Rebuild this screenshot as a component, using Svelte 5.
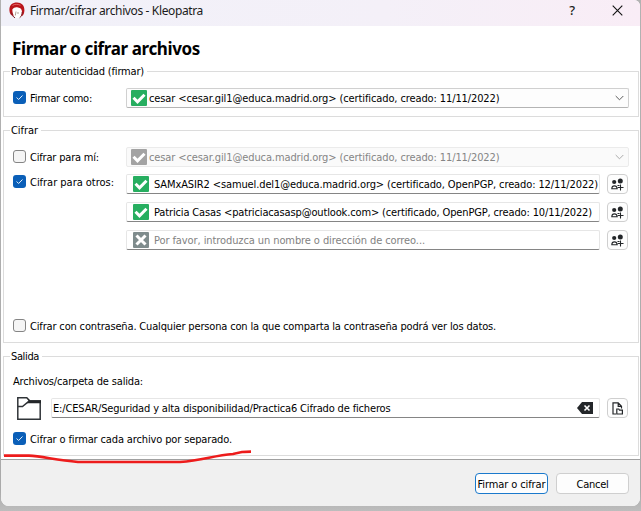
<script>
  const signer = 'cesar <cesar.gil1@educa.madrid.org> (certificado, creado: 11/11/2022)';
  const recipients = [
    { text: 'SAMxASIR2 <samuel.del1@educa.madrid.org> (certificado, OpenPGP, creado: 12/11/2022)', width: 444, known: true },
    { text: 'Patricia Casas <patriciacasasp@outlook.com> (certificado, OpenPGP, creado: 10/11/2022)', width: 438, known: true },
    { text: 'Por favor, introduzca un nombre o dirección de correo...', width: 271, known: false }
  ];

  // Spreads the tracking of a line so that it takes the given width.
  function fit(node, width) {
    const natural = node.getBoundingClientRect().width;
    node.style.letterSpacing = `${(width - natural) / node.textContent.length}px`;
  }
</script>

{#snippet check(on, text, width)}
  <span class="box" class:on>
    {#if on}<svg width="13" height="13" viewBox="0 0 13 13"><path d="M3.6 6.500l2 2 3.900-4" fill="none" stroke="#e6f1fb" stroke-width="1" /></svg>{/if}
  </span>
  <span class="t" use:fit={width}>{text}</span>
{/snippet}

{#snippet badge(color, ok)}
  <svg class="badge" width="16" height="16" viewBox="0 0 16 16">
    <rect width="16" height="16" rx="1" fill={color} />
    <path d={ok ? 'M2.5 7.8l4 4 7-7' : 'M3.5 3.5l9 9M12.5 3.5l-9 9'} fill="none" stroke="#fff" stroke-width="3" />
  </svg>
{/snippet}

{#snippet chevron()}
  <svg class="chev" width="9" height="6" viewBox="0 0 9 6"><path d="M.7 1l3.8 3.8L8.3 1" fill="none" stroke="currentColor" /></svg>
{/snippet}

<div class="desk">
  <main>
    <header>
      <svg width="16" height="17" viewBox="0 0 16 17">
        <path d="M.5 9C-.2 3.500 3 .5 8 .5S16 4 15.300 9.500c-.3 2.500-1.300 4-2.300 4.500L3 13.500C1.500 12.500.7 11 .5 9z" fill="#b9151b" />
        <path d="M3.300 7.500c1.500-2 3.500-2.700 5.700-2 2.500.3 4 1.800 4 4.500 0 3.500-2 6-4.700 6S3.500 13 3.300 7.500z" fill="#fff" />
        <path d="M2.500 10.500c.3 2.500 1.700 4.500 3.500 5.300M13.200 10c0 2.500-.8 4.500-2.500 5.700" stroke="#7a2027" fill="none" />
        <path d="M7 9.500l-.7 4M9 10v2" stroke="#987" stroke-width=".8" fill="none" />
        <path d="M3.500 3.500c2-1.500 5-1.600 8-.2" stroke="#e77" stroke-width=".8" fill="none" />
      </svg>
      <span class="t" use:fit={173}>Firmar/cifrar archivos - Kleopatra</span>
      <b class="help">?</b>
      <svg class="close" width="11" height="11" viewBox="0 0 11 11"><path d="M.7.7l9.600 9.600M10.300.7L.7 10.300" stroke="#111" stroke-width="1.100" /></svg>
    </header>

    <h1><span class="t" use:fit={188}>Firmar o cifrar archivos</span></h1>

    <section class="sign">
      <h2><span class="t" use:fit={133}>Probar autenticidad (firmar)</span></h2>
      <div class="row">
        <div class="lab">{@render check(true, 'Firmar como:', 62)}</div>
        <div class="combo">
          {@render badge('#27ae60', true)}
          <span class="t" use:fit={350.500}>{signer}</span>
          {@render chevron()}
        </div>
      </div>
    </section>

    <section class="encrypt">
      <h2><span class="t" use:fit={27}>Cifrar</span></h2>
      <div class="row">
        <div class="lab">{@render check(false, 'Cifrar para mí:', 69)}</div>
        <div class="combo off">
          {@render badge('#a3a3a3', true)}
          <span class="t" use:fit={350.500}>{signer}</span>
          {@render chevron()}
        </div>
      </div>
      <div class="row others">
        <div class="lab up">{@render check(true, 'Cifrar para otros:', 84)}</div>
        <div class="list">
          {#each recipients as r}
            <div class="line">
              <div class="input" class:hint={!r.known}>
                {@render badge(r.known ? '#27ae60' : '#7f8c8d', r.known)}
                <span class="t" use:fit={r.width}>{r.text}</span>
              </div>
              <button class="tool" aria-label="Seleccionar certificado">
                <svg width="13" height="13" viewBox="0 0 13 13">
                  <circle cx="3.200" cy="4" r="2.100" fill="#232629" />
                  <circle cx="9.300" cy="2.900" r="2.500" fill="#232629" />
                  <path d="M.8 10.800c0-2 .9-2.900 2.700-2.900 1.600 0 2.500.9 2.700 2.900zM6.500 7.500h2M9.500 6.500v6M6.800 9.500h5.700" fill="none" stroke="#232629" stroke-width="1.100" />
                </svg>
              </button>
            </div>
          {/each}
        </div>
      </div>
      <div class="row password">
        {@render check(false, 'Cifrar con contraseña. Cualquier persona con la que comparta la contraseña podrá ver los datos.', 466)}
      </div>
    </section>

    <section class="output">
      <h2><span class="t" use:fit={28}>Salida</span></h2>
      <div class="row caption"><span class="t" use:fit={130}>Archivos/carpeta de salida:</span></div>
      <div class="row path">
        <svg class="folder" width="24" height="23" viewBox="0 0 24 23">
          <path d="M.8.8h9l3 3.200h10.400v18.200H.8zM.8 9.500h4.700l6.500-5.300" fill="none" stroke="#303438" stroke-width="1.500" />
          <path d="M10 .8l3 2.400h11v3H9.500l2.500-2z" fill="#232629" />
        </svg>
        <div class="input">
          <span class="t" use:fit={337.500}>E:/CESAR/Seguridad y alta disponibilidad/Practica6 Cifrado de ficheros</span>
          <svg class="clear" width="16" height="12" viewBox="0 0 16 12">
            <path d="M5 0h11v12H5L0 6z" fill="#232629" />
            <path d="M7.500 3.500l5 5M12.500 3.500l-5 5" stroke="#fff" stroke-width="1.600" />
          </svg>
        </div>
        <button class="tool" aria-label="Elegir carpeta">
          <svg width="11" height="13" viewBox="0 0 11 13">
            <path d="M4 12H1V.9h5.200L9.500 4.300V6.500M6.200.9v3.400H9.500M4.800 12V7h2l.7 1.200h2.900V12z" fill="none" stroke="#232629" stroke-width="1.200" />
          </svg>
        </button>
      </div>
      <div class="row each">{@render check(true, 'Cifrar o firmar cada archivo por separado.', 202)}</div>
    </section>

    <footer>
      <button class="main"><span class="t" use:fit={68}>Firmar o cifrar</span></button>
      <button><span class="t" use:fit={32}>Cancel</span></button>
    </footer>
  </main>

  <svg class="stroke" width="252" height="20" viewBox="0 0 252 20">
    <path d="M4 8.700H29C42 9.500 54 12.500 78 15H180C203 13.500 213 8.500 233 7 242 4.700 243 4.700 251 4.700" fill="none" stroke="#ed1c1c" stroke-width="2.700" />
  </svg>
</div>

<style>
  :global(body) { overflow: hidden; }
  * { box-sizing: border-box; }
  .desk {
    position: relative; width: 641px; height: 511px; padding: 0 1px 5px;
    background: linear-gradient(#b2b2b2, #aaa 96%, #bdbdbd);
    font: 11px/16px "DejaVu Sans Condensed", "DejaVu Sans", sans-serif; color: #000;
  }
  main {
    display: flex; flex-direction: column; height: 506px;
    background: #fff; border-radius: 0 6px 8px 8px; overflow: hidden;
  }
  .t { display: inline-block; white-space: pre; flex: none; padding-top: 2px; }
  header {
    display: flex; align-items: center; height: 26px; padding: 0 17px 6px 8px; flex: none;
    background: linear-gradient(90deg, #f1f1f9, #f4f0f8 60%, #f9edf6);
    font: 12px/16px "Noto Sans", sans-serif; color: #1b1b1b;
  }
  header .t { margin-left: 5px; }
  .help { margin-left: auto; margin-right: 37px; font-size: 13px; font-weight: 500; }
  h1 {
    margin: 12px 0 0 11px; height: 33px; flex: none;
    font: bold 17px/22px "Noto Sans", sans-serif;
  }
  h1 .t { padding-top: 0; }
  section { margin: 0 1px 0 2px; border: 1px solid #dcdcdc; flex: none; }
  h2 {
    width: max-content; height: 16px; margin: -9px 0 0 6px; padding: 0 3px 0 1px;
    background: #fff; font-size: 11px; font-weight: normal;
  }
  h2 .t { padding-top: 1px; }
  .sign { height: 46px; }
  .encrypt { height: 213px; margin-top: 13px; }
  .output { height: 100px; margin-top: 13px; }
  .row { display: flex; align-items: center; height: 20px; margin-top: 9px; padding: 0 9px; }
  .lab { display: flex; align-items: center; width: 113px; height: 20px; flex: none; }
  .box {
    width: 13px; height: 13px; margin: 0 4px 1px 0; flex: none;
    border: 1px solid #858585; border-radius: 3px; background: #f5f5f5;
  }
  .box.on { border: 0; background: #0a5fb8; }
  .box svg { display: block; }
  .combo {
    display: flex; align-items: center; flex: 1; height: 20px; padding: 0 4px;
    background: #fdfdfd; border: 1px solid #d0d0d0; border-bottom-color: #b4b4b4; border-radius: 2px;
  }
  .combo .t { margin-left: 2px; }
  .chev { margin-left: auto; color: #5c5c5c; }
  .off { background: #fafafa; border-color: #ebebeb; color: #858585; }
  .off .chev { color: #aaa; }
  .badge { flex: none; }
  .others { align-items: flex-start; height: 76px; margin-top: 7px; }
  .up { margin-top: -2px; }
  .list { display: flex; flex-direction: column; gap: 8px; flex: 1; }
  .line { display: flex; justify-content: space-between; padding-right: 1px; }
  .input {
    display: flex; align-items: center; width: 474px; height: 20px; padding-left: 6px;
    border: 1px solid #e6e6e6; border-bottom-color: #858585; border-radius: 2px; background: #fff;
  }
  .input .badge + .t { margin-left: 5px; }
  .hint { color: #828282; }
  button {
    display: flex; align-items: center; justify-content: center; padding: 0;
    font: inherit; color: #000; background: #fdfdfd; border: 1px solid #cfcfcf; border-radius: 4px;
  }
  .tool { width: 21px; height: 20px; flex: none; }
  .password { margin-top: 66px; }
  .caption { margin-top: 7px; }
  .path { margin-top: 7px; }
  .folder { margin: 0 10px 0 4px; flex: none; }
  .path .input { width: 549px; padding: 0 6px 0 1px; margin-right: 7px; }
  .clear { margin-left: auto; }
  .each { margin-top: 11px; }
  footer {
    display: flex; justify-content: flex-end; gap: 8px; flex: 1; margin-top: 3px; padding: 13px 11px 0;
    border-top: 1px solid #a0a0a0; background: #f0f0f0;
  }
  footer button { width: 73px; height: 21px; }
  .main { border-color: #1a79cc; }
  .stroke { position: absolute; left: 0; top: 447px; }
</style>
